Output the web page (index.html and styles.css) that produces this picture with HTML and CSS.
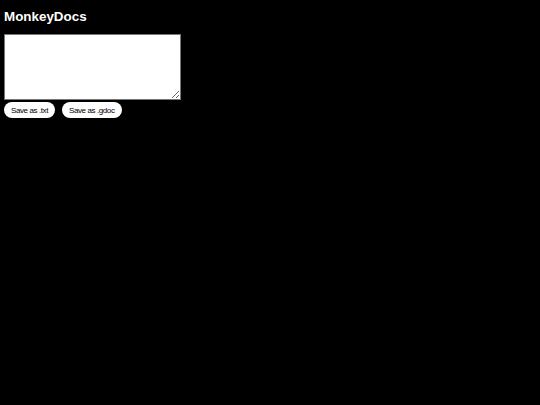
FILE: index.html
```
<!DOCTYPE html>
<html>
<head>
<meta charset="utf-8">
<link rel="stylesheet" href="styles.css">
</head>
<body>
<h1 class="title">MonkeyDocs</h1>
<textarea class="editor"></textarea>
<div class="actions">
  <button class="btn">Save as .txt</button>
  <button class="btn">Save as .gdoc</button>
</div>
</body>
</html>
```
FILE: styles.css
```
html, body {
  background: #000;
}
body {
  margin: 4px;
  font-family: "Liberation Sans", Arial, sans-serif;
  color: #fff;
}
.title {
  font-size: 13.4px;
  font-weight: bold;
  margin: 5px 0 9px 0;
  line-height: 16px;
}
.editor {
  display: block;
  box-sizing: border-box;
  width: 177px;
  height: 66px;
  margin: 0;
  background: #fff;
  border: 1px solid #767676;
}
.actions {
  display: flex;
  gap: 7px;
  margin-top: 2px;
}
.btn {
  box-sizing: border-box;
  height: 16px;
  padding: 0 7px;
  border: none;
  border-radius: 8px;
  background: #fff;
  color: #000;
  font-family: "Liberation Sans", Arial, sans-serif;
  font-size: 8px;
  letter-spacing: -0.4px;
}
```
